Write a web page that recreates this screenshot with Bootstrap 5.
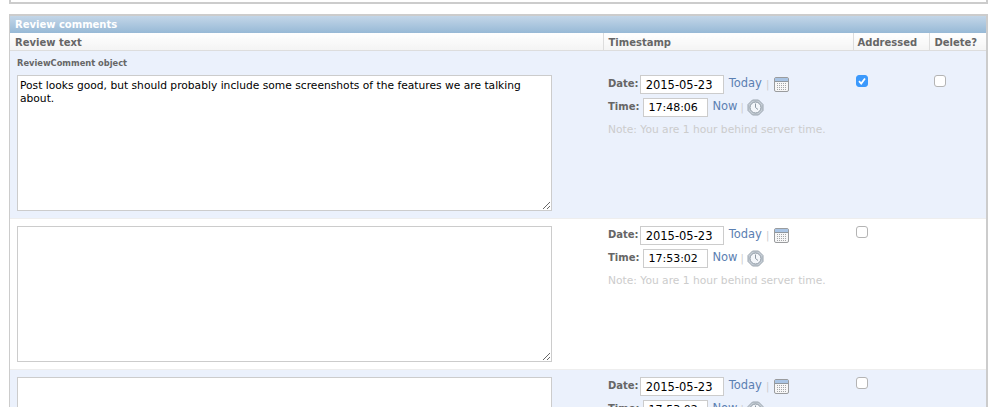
<!DOCTYPE html>
<html lang="en">
<head>
    <meta charset="UTF-8">
    <meta name="viewport" content="width=device-width, initial-scale=1.0">
    <title>Review comments</title>
    <link href="https://cdn.jsdelivr.net/npm/bootstrap@5.3.0/dist/css/bootstrap.min.css" rel="stylesheet">
    <style>
        html, body { height: 407px; overflow: hidden; }
        body { font-family: "DejaVu Sans", sans-serif; font-size: 10px; color: #333; background: #fff; }
        .top-box { margin: 0 9px; height: 4px; border: 2px solid #ccc; border-top: 0; }
        .inline-group { margin: 10px 9px 0; border-style: solid; border-color: #ccc; border-width: 2px 2px 0 1px; }
        .group-title { height: 17px; line-height: 17px; padding-left: 5px; font-size: 10px; font-weight: 700; color: #fff; background: linear-gradient(#c3d6e8, #97b9d6); }
        .review-table { table-layout: fixed; width: 100%; margin: 0; border-collapse: collapse; }
        .col-text { width: 593px; }
        .col-stamp { width: 250px; }
        .col-flag { width: 76px; }
        .review-table th { height: 17px; padding: 2px 0 0 5px; font-size: 10px; line-height: 15px; font-weight: 700; color: #666; background: linear-gradient(#fff, #f4f4f4); border-bottom: 1px solid #ddd; border-left: 1px solid #ddd; }
        .review-table th:first-child { border-left: 0; }
        .review-table th.head-flag { padding-left: 4px; }
        .review-table td { padding: 0; vertical-align: top; border-bottom: 1px solid #eee; background: #fff; }
        .review-table tr.row-tint td { background: #ebf1fc; }
        .review-table td.text-cell { height: 151px; padding-top: 7px; }
        .review-table td.text-first { height: 168px; padding-top: 0; }
        .review-table td.stamp-cell { padding: 5px 0 0 5px; }
        .review-table td.stamp-first { padding-top: 22px; }
        .review-table td.flag-cell { padding: 7px 0 0 3px; }
        .review-table td.flag-first { padding: 24px 0 0 3px; }
        .review-table td.flag-delete { padding: 24px 0 0 5px; }
        .object-name { height: 24px; padding: 6px 0 0 7px; font-size: 8.300px; line-height: 12px; font-weight: 700; color: #666; }
        .comment-box { display: block; width: 535px; height: 136px; margin-left: 7px; padding: 3px 2px; border: 1px solid #ccc; border-radius: 0; font-family: "DejaVu Sans", sans-serif; font-size: 10.700px; line-height: 13px; color: #000; background: #fff; }
        .stamp-line { height: 23px; font-weight: 700; color: #666; white-space: nowrap; }
        .stamp-label { margin-top: -2px; }
        .stamp-input { height: 19px; padding: 0 4px; border: 1px solid #ccc; font-family: "DejaVu Sans", sans-serif; line-height: 17px; color: #000; background: #fff; }
        .date-input { width: 84px; margin: 0 5px 0 1px; padding-left: 5px; font-size: 11.500px; }
        .time-input { width: 65px; margin: 0 4px 0 4px; font-size: 11px; }
        .shortcut { margin-top: -1px; font-size: 11.500px; font-weight: 400; color: #5b80b2; text-decoration: none; }
        .sep { margin: -1px 5px 0 4px; font-weight: 400; color: #ccc; }
        .time-line .sep { margin-left: 3px; margin-right: 3px; }
        .server-note { margin-top: 4px; font-size: 10.700px; line-height: 13px; font-weight: 400; color: #ccc; white-space: nowrap; }
        .tick-box { width: 12px; height: 12px; margin: 0; border-radius: 3px; border: 1px solid #b4b4b4; background: #fff; }
        .tick-box.is-on { border-color: #3b99fc; background: #3b99fc; }
        .tick-box svg { display: block; }
    </style>
</head>
<body>
    <svg width="0" height="0" class="d-none">
        <symbol id="icon-cal" viewBox="0 0 15 15"><rect x=".5" y=".5" width="14" height="14" rx="1.500" fill="#f7f7f7" stroke="#9a9c9e"/><rect x="1" y="1" width="13" height="3" fill="#a9c4e4"/><path d="M1 4.500h13" stroke="#8f979f"/><path d="M3 6.500h9M3 8.500h9M3 10.500h9M3 12.500h9" stroke="#a4a6a8" stroke-dasharray="1 1" fill="none"/></symbol>
        <symbol id="icon-clock" viewBox="0 0 17 17"><path d="M5.500 1h6L16 5.500v6L11.500 16h-6L1 11.500v-6z" fill="#c6ced6" stroke="#9aa4ae"/><circle cx="8.500" cy="8.500" r="5.500" fill="#f3f6fa" stroke="#8d98a3"/><path d="M8.500 4.500v4l2.500 2" stroke="#8d98a3" fill="none"/></symbol>
    </svg>
    <div class="top-box"></div>
    <div class="inline-group">
        <div class="group-title">Review comments</div>
        <table class="review-table">
            <colgroup><col class="col-text"><col class="col-stamp"><col class="col-flag"><col></colgroup>
            <thead>
                <tr><th>Review text</th><th>Timestamp</th><th class="head-flag">Addressed</th><th>Delete?</th></tr>
            </thead>
            <tbody>
                <tr class="row-tint">
                    <td class="text-cell text-first">
                        <div class="object-name">ReviewComment object</div>
                        <textarea class="comment-box">Post looks good, but should probably include some screenshots of the features we are talking about.</textarea>
                    </td>
                    <td class="stamp-cell stamp-first">
                        <div class="stamp-line d-flex align-items-center"><span class="stamp-label">Date:</span><input class="stamp-input date-input" value="2015-05-23"><a class="shortcut" href="#">Today</a><span class="sep">|</span><svg width="15" height="15"><use href="#icon-cal"/></svg></div>
                        <div class="stamp-line time-line d-flex align-items-center"><span class="stamp-label">Time:</span><input class="stamp-input time-input" value="17:48:06"><a class="shortcut" href="#">Now</a><span class="sep">|</span><svg width="17" height="17"><use href="#icon-clock"/></svg></div>
                        <div class="server-note">Note: You are 1 hour behind server time.</div>
                    </td>
                    <td class="flag-cell flag-first"><div class="tick-box is-on"><svg width="10" height="10" viewBox="0 0 10 10"><path d="M2 5.200 4.200 7.500 8 2.500" stroke="#fff" stroke-width="1.800" fill="none"/></svg></div></td>
                    <td class="flag-cell flag-delete"><div class="tick-box"></div></td>
                </tr>
                <tr>
                    <td class="text-cell"><textarea class="comment-box"></textarea></td>
                    <td class="stamp-cell">
                        <div class="stamp-line d-flex align-items-center"><span class="stamp-label">Date:</span><input class="stamp-input date-input" value="2015-05-23"><a class="shortcut" href="#">Today</a><span class="sep">|</span><svg width="15" height="15"><use href="#icon-cal"/></svg></div>
                        <div class="stamp-line time-line d-flex align-items-center"><span class="stamp-label">Time:</span><input class="stamp-input time-input" value="17:53:02"><a class="shortcut" href="#">Now</a><span class="sep">|</span><svg width="17" height="17"><use href="#icon-clock"/></svg></div>
                        <div class="server-note">Note: You are 1 hour behind server time.</div>
                    </td>
                    <td class="flag-cell"><div class="tick-box"></div></td>
                    <td></td>
                </tr>
                <tr class="row-tint">
                    <td class="text-cell"><textarea class="comment-box"></textarea></td>
                    <td class="stamp-cell">
                        <div class="stamp-line d-flex align-items-center"><span class="stamp-label">Date:</span><input class="stamp-input date-input" value="2015-05-23"><a class="shortcut" href="#">Today</a><span class="sep">|</span><svg width="15" height="15"><use href="#icon-cal"/></svg></div>
                        <div class="stamp-line time-line d-flex align-items-center"><span class="stamp-label">Time:</span><input class="stamp-input time-input" value="17:53:02"><a class="shortcut" href="#">Now</a><span class="sep">|</span><svg width="17" height="17"><use href="#icon-clock"/></svg></div>
                    </td>
                    <td class="flag-cell"><div class="tick-box"></div></td>
                    <td></td>
                </tr>
            </tbody>
        </table>
    </div>
    <script src="https://cdn.jsdelivr.net/npm/bootstrap@5.3.0/dist/js/bootstrap.bundle.min.js"></script>
</body>
</html>
